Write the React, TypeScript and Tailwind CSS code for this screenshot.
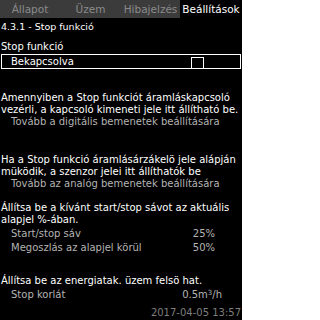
import React from "react";

const tabs = [
  { label: "Állapot", w: "w-[60px]" },
  { label: "Üzem", w: "w-[61px]" },
  { label: "Hibajelzés", w: "w-[59px]" },
];

function Row({ label, value }: { label: React.ReactNode; value: React.ReactNode }) {
  return (
    <div className="flex h-[14px] items-end justify-between pl-[10px] text-[#b4b4b4]">
      <span>{label}</span>
      <span className="pr-[26px]">{value}</span>
    </div>
  );
}

export default function App() {
  return (
    <div
      className="relative h-[320px] w-[242px] overflow-hidden bg-black text-[10px] leading-[12px] text-white"
      style={{ fontFamily: '"DejaVu Sans", sans-serif' }}
    >
      {/* tab bar */}
      <div className="flex h-[18px] bg-[#3b3b3b] text-[10.5px]">
        {tabs.map((t) => (
          <div key={t.label} className={`flex ${t.w} items-center justify-center text-[#8a8a8a]`}>
            {t.label}
          </div>
        ))}
        <div className="flex flex-1 items-center justify-center bg-black text-white">Beállítások</div>
      </div>

      <div className="px-[1px] pt-[3px] text-[9.5px] leading-[11px]">4.3.1 - Stop funkció</div>

      <div className="mt-[9px] px-[1px]">Stop funkció</div>
      <div className="mx-[1px] mt-[1px] flex h-[15px] items-center border border-white pl-[9px]">
        <span className="flex-1">Bekapcsolva</span>
        <span className="mr-[36px] mt-[2px] h-[12px] w-[13px] border-[1.5px] border-white" />
      </div>

      <div className="mt-[23px] px-[1px]">
        <p>Amennyiben a Stop funkciót áramláskapcsoló vezérli, a kapcsoló kimeneti jele itt állítható be.</p>
        <p className="pl-[10px] text-[#b4b4b4]">Tovább a digitális bemenetek beállítására</p>
      </div>

      <div className="mt-[26px] px-[1px]">
        <p>Ha a Stop funkció áramlásárzákelö jele alápján müködik, a szenzor jelei itt állíthatók be</p>
        <p className="pl-[10px] text-[#b4b4b4]">Tovább az analóg bemenetek beállítására</p>
      </div>

      <div className="mt-[12px] px-[1px]">
        <p>Állítsa be a kívánt start/stop sávot az aktuális alapjel %-ában.</p>
        <Row label="Start/stop sáv" value="25%" />
        <Row label="Megoszlás az alapjel körül" value="50%" />
      </div>

      <div className="mt-[21px] px-[1px]">
        <p>Állítsa be az energiatak. üzem felsö hat.</p>
        <div className="flex h-[14px] items-end justify-between pl-[10px] text-[#b4b4b4]">
          <span>Stop korlát</span>
          <span className="pr-[19px]">
            0.5m<sup className="text-[7px]">3</sup>/h
          </span>
        </div>
      </div>

      <div className="absolute bottom-[1px] right-[1px] text-[#7e7e7e]">2017-04-05 13:57</div>
    </div>
  );
}
